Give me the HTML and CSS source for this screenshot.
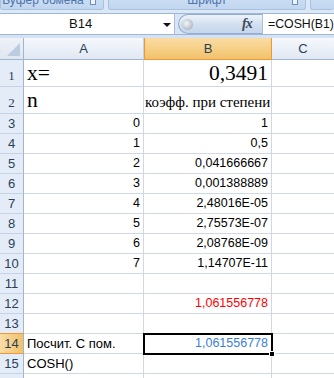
FILE: index.html
```html
<!DOCTYPE html>
<html lang="ru">
<head>
    <meta charset="UTF-8">
    <meta name="viewport" content="width=device-width, initial-scale=1.0">
    <title>COSH - Excel</title>
    <link rel="stylesheet" href="styles.css">
</head>
<body>
    <div class="ribbon">
        <div class="group g-clip"><span>Буфер обмена</span><i class="launcher"></i></div>
        <div class="group g-font"><span>Шрифт</span><i class="launcher"></i></div>
        <div class="group g-rest"></div>
    </div>
    <div class="strip"></div>

    <div class="formula-bar">
        <div class="name-box"><span>B14</span><i class="arrow"></i></div>
        <div class="fx-pill"><i class="knob"></i><span class="fx">fx</span></div>
        <div class="formula">=COSH(B1)</div>
    </div>
    <div class="strip low"></div>

    <div class="sheet">
        <div class="hdr corner"></div>
        <div class="hdr col">A</div>
        <div class="hdr col active">B</div>
        <div class="hdr col last">C</div>

        <div class="rh serif"><span>1</span></div>
        <div class="cell serif">x=</div>
        <div class="cell serif num">0,3491</div>
        <div class="cell last"></div>

        <div class="rh serif"><span>2</span></div>
        <div class="cell serif">n</div>
        <div class="cell serif tight"><span class="caption">коэфф. при степени</span></div>
        <div class="cell last"></div>

        <div class="rh">3</div><div class="cell num">0</div><div class="cell num">1</div><div class="cell last"></div>
        <div class="rh">4</div><div class="cell num">1</div><div class="cell num">0,5</div><div class="cell last"></div>
        <div class="rh">5</div><div class="cell num">2</div><div class="cell num">0,041666667</div><div class="cell last"></div>
        <div class="rh">6</div><div class="cell num">3</div><div class="cell num">0,001388889</div><div class="cell last"></div>
        <div class="rh">7</div><div class="cell num">4</div><div class="cell num">2,48016E-05</div><div class="cell last"></div>
        <div class="rh">8</div><div class="cell num">5</div><div class="cell num">2,75573E-07</div><div class="cell last"></div>
        <div class="rh">9</div><div class="cell num">6</div><div class="cell num">2,08768E-09</div><div class="cell last"></div>
        <div class="rh">10</div><div class="cell num">7</div><div class="cell num">1,14707E-11</div><div class="cell last"></div>
        <div class="rh">11</div><div class="cell"></div><div class="cell"></div><div class="cell last"></div>
        <div class="rh">12</div><div class="cell"></div><div class="cell num red">1,061556778</div><div class="cell last"></div>
        <div class="rh">13</div><div class="cell"></div><div class="cell"></div><div class="cell last"></div>
        <div class="rh active">14</div>
        <div class="cell overflow">Посчит. С пом.</div>
        <div class="cell num blue selected">1,061556778<i class="handle"></i></div>
        <div class="cell last"></div>
        <div class="rh">15</div><div class="cell overflow">COSH()</div><div class="cell"></div><div class="cell last"></div>
        <div class="rh"></div><div class="cell"></div><div class="cell"></div><div class="cell last"></div>
    </div>
</body>
</html>
```

FILE: styles.css
```css
* {
    box-sizing: border-box;
}
body {
    margin: 0;
    width: 334px;
    height: 378px;
    overflow: hidden;
    background: #ffffff;
    font-family: "Liberation Sans", Arial, sans-serif;
}

/* ribbon group labels (cut off at the top) */
.ribbon {
    display: flex;
    height: 10px;
    background: #dbe7f5;
}
.group {
    position: relative;
    height: 10px;
    background: linear-gradient(#c9dcf2, #c1d6ef);
    border: 1px solid #a9c1e0;
    border-top: none;
    border-radius: 0 0 3px 3px;
    overflow: hidden;
    text-align: center;
}
.group span {
    display: block;
    margin-top: -7px;
    font-size: 12px;
    line-height: 14px;
    color: #4f74ac;
}
.g-clip {
    width: 104px;
    margin-right: 4px;
}
.g-clip span {
    padding-right: 18px;
}
.g-font {
    width: 198px;
    margin-right: 4px;
}
.g-rest {
    flex: 1;
    border-right: none;
}
.launcher {
    position: absolute;
    right: 7px;
    top: 0;
    width: 6px;
    height: 5px;
    border: 1px solid #6d8fbd;
    border-top: none;
    background: #eef4fb;
}
.strip {
    height: 3px;
    background: #dce8f6;
}
.strip.low {
    height: 3px;
    background: #d5e2f3;
}

/* formula bar */
.formula-bar {
    display: flex;
    height: 22px;
    background: #d9e5f4;
    border-top: 1px solid #9fb7d7;
    border-bottom: 1px solid #9fb7d7;
}
.name-box {
    position: relative;
    width: 175px;
    background: #ffffff;
    border-right: 1px solid #a8bedb;
    font-size: 13px;
    line-height: 20px;
    padding-left: 69px;
    color: #111111;
}
.arrow {
    position: absolute;
    left: 163px;
    top: 9px;
    border-left: 4px solid transparent;
    border-right: 4px solid transparent;
    border-top: 4px solid #111111;
}
.fx-pill {
    position: relative;
    width: 84px;
    margin-left: 3px;
    height: 20px;
    border: 1px solid #93acd0;
    border-right: none;
    border-radius: 10px 0 0 10px;
    background: linear-gradient(#eef3fa, #d2def0 55%, #c6d6ec);
}
.knob {
    position: absolute;
    left: 3px;
    top: 4px;
    width: 11px;
    height: 11px;
    border-radius: 50%;
    background: radial-gradient(circle at 40% 40%, #f4f6f9, #b6bcc6 70%, #9aa3b0);
}
.fx {
    position: absolute;
    left: 63px;
    top: 1px;
    font-family: "Liberation Serif", "Times New Roman", serif;
    font-style: italic;
    font-weight: bold;
    font-size: 14px;
    line-height: 16px;
    color: #3d4a5c;
    letter-spacing: -1px;
}
.formula {
    flex: 1;
    background: #ffffff;
    border-left: 1px solid #a8bedb;
    padding-left: 5px;
    font-size: 12.3px;
    line-height: 20px;
    color: #111111;
    white-space: nowrap;
    overflow: hidden;
}

/* sheet grid */
.sheet {
    display: grid;
    grid-template-columns: 24px 120px 128px 62px;
    grid-template-rows: 22px 27px 27px repeat(14, 20px);
    font-size: 12.5px;
    color: #000000;
}
.hdr {
    background: linear-gradient(#f6f8fc, #e9eff7 60%, #e1e8f3);
    border-right: 1px solid #c5d3e6;
    border-bottom: 1px solid #9eb6ce;
    text-align: center;
    line-height: 21px;
    font-size: 13px;
    color: #2b3f58;
}
.hdr.last {
    border-right: none;
}
.hdr.active {
    background: linear-gradient(#f9dca6, #f6cf84 55%, #f2c16a);
    border-left: 1px solid #f29536;
    border-right: 1px solid #f29536;
    border-bottom-color: #f29536;
}
.corner {
    position: relative;
    background: linear-gradient(#eef2f8, #dfe6f0);
    border-right: 1px solid #9eb6ce;
}
.corner::after {
    content: "";
    position: absolute;
    right: 3px;
    bottom: 3px;
    border-left: 13px solid transparent;
    border-bottom: 13px solid #bccbdf;
}
.rh {
    background: #e4ecf7;
    border-right: 1px solid #9eb6ce;
    border-bottom: 1px solid #c5d3e6;
    text-align: center;
    line-height: 19px;
    font-size: 13px;
    color: #2b3f58;
}
.rh.active {
    background: linear-gradient(90deg, #f9dca6, #f2c16a);
    border-bottom-color: #f29536;
    border-top: 1px solid #f29536;
    margin-top: -1px;
}
.cell {
    position: relative;
    border-right: 1px solid #d0d7e5;
    border-bottom: 1px solid #d0d7e5;
    padding: 0 3px;
    line-height: 19px;
    white-space: nowrap;
}
.cell.last {
    border-right: none;
}
.cell.overflow {
    overflow: visible;
    z-index: 1;
    font-size: 13px;
}
.num {
    text-align: right;
}
.serif {
    font-family: "Liberation Serif", "Times New Roman", serif;
    font-size: 21.5px;
    line-height: 26px;
}
.rh.serif span {
    font-size: 13px;
}
.tight {
    padding: 0 0 0 1px;
}
.caption {
    font-size: 15px;
}
.red {
    color: #ff0000;
}
.blue {
    color: #3a80d6;
}
.selected {
    outline: 2px solid #000000;
    outline-offset: -1px;
    z-index: 2;
}
.handle {
    position: absolute;
    right: -4px;
    bottom: -4px;
    width: 6px;
    height: 6px;
    background: #000000;
    border: 1px solid #ffffff;
}
```
